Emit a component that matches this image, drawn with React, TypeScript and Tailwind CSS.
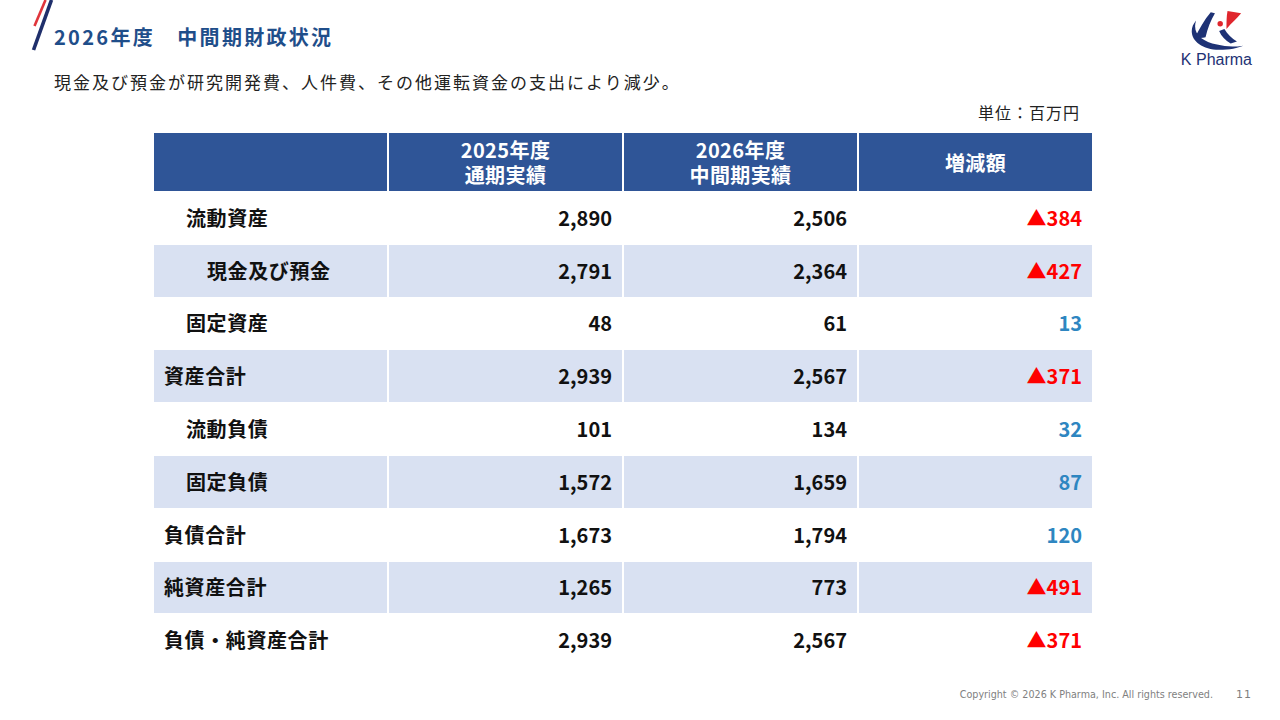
import React from "react";

type Row = {
  label: string;
  indent: string;
  a: string;
  b: string;
  d: string;
  neg: boolean;
  stripe: boolean;
};

const rows: Row[] = [
  { label: "流動資産", indent: "pl-[32px]", a: "2,890", b: "2,506", d: "▲384", neg: true, stripe: false },
  { label: "現金及び預金", indent: "pl-[53px]", a: "2,791", b: "2,364", d: "▲427", neg: true, stripe: true },
  { label: "固定資産", indent: "pl-[32px]", a: "48", b: "61", d: "13", neg: false, stripe: false },
  { label: "資産合計", indent: "pl-[10px]", a: "2,939", b: "2,567", d: "▲371", neg: true, stripe: true },
  { label: "流動負債", indent: "pl-[32px]", a: "101", b: "134", d: "32", neg: false, stripe: false },
  { label: "固定負債", indent: "pl-[32px]", a: "1,572", b: "1,659", d: "87", neg: false, stripe: true },
  { label: "負債合計", indent: "pl-[10px]", a: "1,673", b: "1,794", d: "120", neg: false, stripe: false },
  { label: "純資産合計", indent: "pl-[10px]", a: "1,265", b: "773", d: "▲491", neg: true, stripe: true },
  { label: "負債・純資産合計", indent: "pl-[10px]", a: "2,939", b: "2,567", d: "▲371", neg: true, stripe: false },
];

const jp = "font-['Noto_Sans_CJK_JP',sans-serif]";

function Logo() {
  return (
    <div className="flex flex-col items-center">
      <svg width="56" height="44" viewBox="0 0 52 42">
        <path d="M7,11 C-4,24 8,39 29,39 C39,39 47,37 52,35 C43,36.5 35,36 27,34 C12,31 3,23 7,11 Z" fill="#1E3275" />
        <path d="M21,3 L25,4 C21,11 18,18 16,27 C13,28 9,28 6,27 C10,19 15,10 21,3 Z" fill="#1E3275" />
        <circle cx="30" cy="14" r="2.6" fill="#E0262D" />
        <path d="M37,2 L50,4 C46,9 41,13 36,19 C36,13 36,7 37,2 Z" fill="#E0262D" />
        <path d="M29,21 L34,19 C37,24 41,28 46,31 L40,33 C35,30 31,26 29,21 Z" fill="#1E3275" />
      </svg>
      <div className="font-['Liberation_Sans',sans-serif] text-[16px] leading-[18px] text-[#1E3275] -mt-[2px]">K Pharma</div>
    </div>
  );
}

export default function App() {
  return (
    <div className={`relative w-[1280px] h-[720px] bg-white overflow-hidden ${jp}`}>
      <svg className="absolute left-0 top-0" width="60" height="55" viewBox="0 0 60 55">
        <line x1="45.5" y1="0" x2="34.5" y2="26" stroke="#E0353B" strokeWidth="2.6" />
        <line x1="51.5" y1="0" x2="33.5" y2="50" stroke="#1F2F6B" strokeWidth="3.6" />
      </svg>

      <div className="flex justify-between items-start h-[70px]">
        <div className="pl-[54px] pt-[23px] text-[20px] leading-[28px] font-bold tracking-[2.3px] text-[#1F4E8A] whitespace-pre">
          2026年度　中間期財政状況
        </div>
        <div className="pt-[9px] pr-[28px]">
          <Logo />
        </div>
      </div>

      <div className="pl-[54px] text-[17px] leading-[24px] tracking-[2px] text-[#222]">
        現金及び預金が研究開発費、人件費、その他運転資金の支出により減少。
      </div>

      <div className="w-[938px] ml-[154px] flex flex-col">
        <div className="flex justify-end pr-[12px] pt-[7px] text-[16px] leading-[22px] tracking-[1px] text-[#222] h-[27px]">
          単位：百万円
        </div>

        <div className="grid grid-cols-4 gap-x-[2px] h-[58px] mt-[12px]">
          <div className="bg-[#2F5597]" />
          <div className="bg-[#2F5597] flex flex-col items-center justify-center text-white font-bold text-[20px] leading-[25px] tracking-[0.4px]">
            <div className="h-[25px] leading-[25px]">2025年度</div>
            <div className="h-[25px] leading-[25px]">通期実績</div>
          </div>
          <div className="bg-[#2F5597] flex flex-col items-center justify-center text-white font-bold text-[20px] leading-[25px] tracking-[0.4px]">
            <div className="h-[25px] leading-[25px]">2026年度</div>
            <div className="h-[25px] leading-[25px]">中間期実績</div>
          </div>
          <div className="bg-[#2F5597] flex items-center justify-center text-white font-bold text-[20px] leading-[25px] tracking-[0.4px]">
            増減額
          </div>
        </div>

        {rows.map((r, i) => {
          const bg = r.stripe ? "bg-[#D9E1F2]" : "bg-white";
          return (
            <div key={i} className="grid grid-cols-4 gap-x-[2px] h-[52.8px] border-t border-white">
              <div className={`${bg} ${r.indent} flex items-center text-[20px] font-bold tracking-[0.6px] text-[#111]`}>
                {r.label}
              </div>
              <div className={`${bg} pr-[10px] flex items-center justify-end text-[20px] font-bold text-[#111]`}>
                {r.a}
              </div>
              <div className={`${bg} pr-[10px] flex items-center justify-end text-[20px] font-bold text-[#111]`}>
                {r.b}
              </div>
              <div
                className={`${bg} pr-[10px] flex items-center justify-end text-[20px] font-bold ${
                  r.neg ? "text-[#FF0000]" : "text-[#2E86C1]"
                }`}
              >
                {r.d}
              </div>
            </div>
          );
        })}
      </div>

      <div className="absolute left-0 right-0 bottom-[17px] flex justify-end items-center pr-[28px] font-['DejaVu_Sans',sans-serif] text-[9.6px] text-[#7F7F7F]">
        <span>Copyright © 2026 K Pharma, Inc. All rights reserved.</span>
        <span className="ml-[23px] text-[11px] tracking-[1px]">11</span>
      </div>
    </div>
  );
}
